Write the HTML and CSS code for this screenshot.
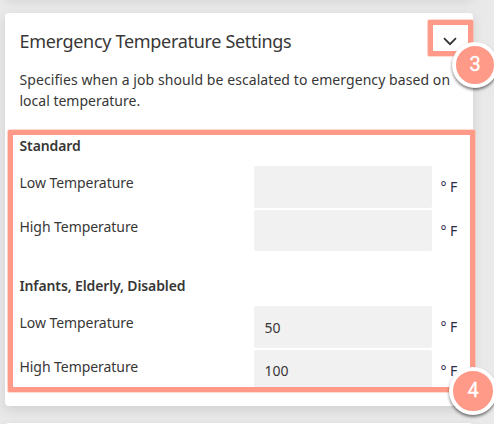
FILE: index.html
```html
<!DOCTYPE html>
<html lang="en">
<head>
<meta charset="utf-8">
<title>Emergency Temperature Settings</title>
<link rel="stylesheet" href="styles.css">
</head>
<body>
<div class="page">
  <section class="card previous"></section>
  <section class="card settings">
    <header class="card-header">
      <h1>Emergency Temperature Settings</h1>
      <svg class="chevron" viewBox="0 0 14 9" width="14" height="9"><path d="M1 1.2 7 7.2 13 1.2"/></svg>
    </header>
    <p class="intro"><span class="line-one">Specifies when a job should be escalated to emergency based on</span><br><span class="line-two">local temperature.</span></p>
    <div class="group">
      <h2>Standard</h2>
      <div class="row"><span>Low Temperature</span><div class="field"></div><span class="unit">° F</span></div>
      <div class="row"><span>High Temperature</span><div class="field"></div><span class="unit">° F</span></div>
    </div>
    <div class="group">
      <h2>Infants, Elderly, Disabled</h2>
      <div class="row"><span>Low Temperature</span><div class="field">50</div><span class="unit">° F</span></div>
      <div class="row"><span>High Temperature</span><div class="field">100</div><span class="unit">° F</span></div>
    </div>
  </section>
  <section class="card next"></section>
  <div class="outline outline-toggle"></div>
  <div class="outline outline-fields"></div>
  <div class="badge badge-three">3</div>
  <div class="badge badge-four">4</div>
</div>
</body>
</html>
```
FILE: styles.css
```css
* { box-sizing: border-box; }
body { margin: 0; background: #e9e9e9; color: #383736; font: 14px/21px "Noto Sans", sans-serif; }
.page { position: relative; width: 494px; height: 424px; overflow: hidden; display: flex; flex-direction: column; padding-left: 5px; }
.card { width: 468px; flex: none; background: #fff; border-radius: 4px; box-shadow: 0 4px 12px rgba(0,0,0,.11); }
.previous { height: 20px; margin-top: -24px; margin-bottom: 17px; }
.settings { height: 393px; padding: 0 15px 0 14.5px; }
.next { height: 30px; margin-top: 17px; }
.card-header { height: 56px; display: flex; align-items: center; justify-content: space-between; }
h1 { margin: 0; font-size: 18px; line-height: 28px; font-weight: 400; letter-spacing: -.31px; white-space: nowrap; }
.chevron { fill: none; stroke: #323130; stroke-width: 1.7; margin-right: 1px; }
.intro { margin: 0 0 24px; white-space: nowrap; }
.line-one { letter-spacing: .075px; }
.group { height: 140px; }
h2 { margin: 0 0 10px; height: 21px; font-size: 14px; line-height: 21px; font-weight: 600; letter-spacing: -.12px; white-space: nowrap; }
.row { display: grid; grid-template-columns: 234.5px 178px 1fr; height: 44px; align-items: start; }
.row > span { line-height: 34px; letter-spacing: -.06px; white-space: nowrap; }
.field { height: 42px; background: #f1f1f1; border-radius: 2px; padding-left: 10.5px; line-height: 43px; }
.row + .row .field { height: 41px; line-height: 41px; }
.row > .unit { line-height: 42px; padding-left: 8.5px; color: #292947; }
.outline { position: absolute; border: 5px solid #ff9a89; box-shadow: 0 0 0 .6px #ffb7aa; border-radius: 1px; }
.outline-toggle { left: 427.5px; top: 20px; width: 45px; height: 35.5px; }
.outline-fields { left: 8px; top: 130px; width: 467px; height: 262px; }
.badge { position: absolute; border: 4px solid #fff; border-radius: 50%; background: #ff9a89; color: #fff; display: flex; align-items: center; justify-content: center; padding-bottom: 2px; font: 20px/20px Roboto, sans-serif; -webkit-text-stroke: .3px #fff; box-shadow: 0 2px 3px rgba(0,0,0,.5); }
.badge-three { left: 452px; top: 42px; width: 46px; height: 46px; }
.badge-four { left: 449px; top: 367px; width: 48px; height: 48px; }
```
